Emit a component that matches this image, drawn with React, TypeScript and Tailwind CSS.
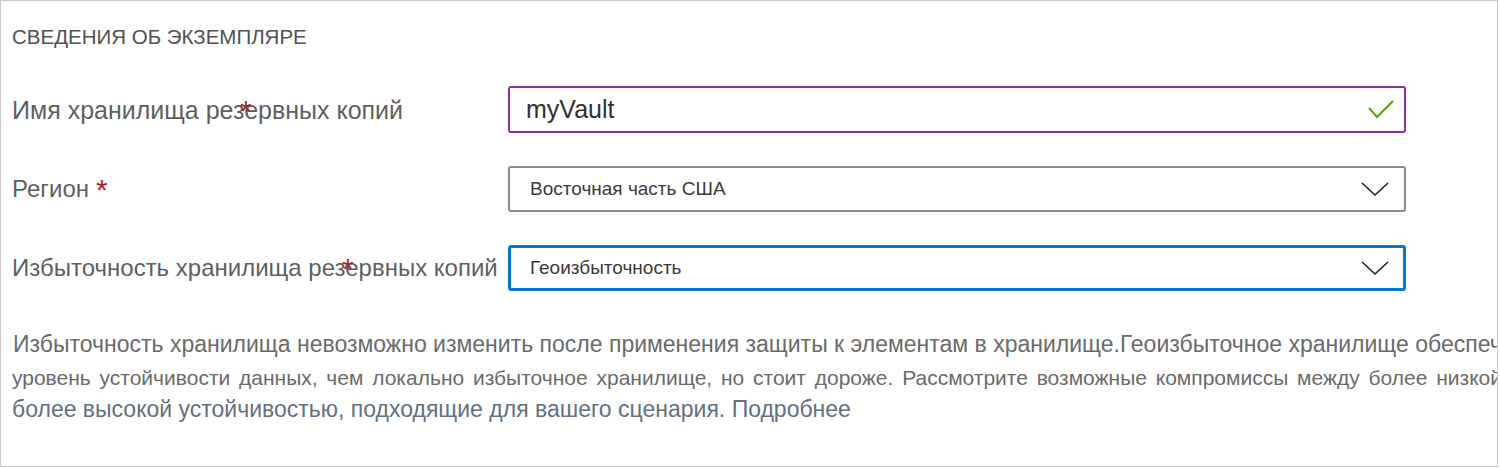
import React from 'react';

function Chevron() {
  return (
    <svg width="28" height="16" viewBox="0 0 28 16" fill="none">
      <polyline points="1,2 14,14 27,2" stroke="#201f1e" strokeWidth="1.6" />
    </svg>
  );
}

function Check() {
  return (
    <svg width="26" height="20" viewBox="0 0 26 20" fill="none">
      <polyline points="1,8 9,17 25,1" stroke="#57a300" strokeWidth="2" />
    </svg>
  );
}

function Label({ text, star, size }: { text: string; star: number; size: string }) {
  return (
    <div className={`relative w-[496px] shrink-0 leading-[30px] text-[#5f5f5f] ${size}`}>
      {text}
      <span className="absolute top-[1px] text-[30px] leading-none text-[#a4262c]" style={{ left: star }}>*</span>
    </div>
  );
}

export default function App() {
  return (
    <div className="w-[1500px] h-[468px] bg-white overflow-hidden font-['Liberation_Sans',Arial,sans-serif]">
      <div className="w-[1498px] h-[467px] border border-[#c8c8c8] pl-[11px] pt-[22px] overflow-hidden">
        <h2 className="text-[20.5px] leading-[28px] text-[#505050]">СВЕДЕНИЯ ОБ ЭКЗЕМПЛЯРЕ</h2>

        <div className="mt-[35px] flex flex-col gap-[33px]">
          <div className="flex items-center h-[47px]">
            <Label text="Имя хранилища резервных копий" star={228} size="text-[25px]" />
            <div className="w-[898px] h-[47px] border-2 border-[#8a2da5] rounded-[3px] flex items-center justify-between pl-[16px] pr-[10px]">
              <span className="text-[25px] text-[#323130]">myVault</span>
              <Check />
            </div>
          </div>

          <div className="flex items-center h-[46px]">
            <Label text="Регион" star={84} size="text-[24px]" />
            <div className="w-[898px] h-[46px] border-2 border-[#8a8886] rounded-[3px] flex items-center justify-between pl-[20px] pr-[15px]">
              <span className="text-[19px] text-[#3b3a39]">Восточная часть США</span>
              <Chevron />
            </div>
          </div>

          <div className="flex items-center h-[46px]">
            <Label text="Избыточность хранилища резервных копий" star={330} size="text-[24px]" />
            <div className="w-[898px] h-[46px] border-[3px] border-[#0078d4] rounded-[3px] flex items-center justify-between pl-[19px] pr-[14px]">
              <span className="text-[19px] text-[#3b3a39]">Геоизбыточность</span>
              <Chevron />
            </div>
          </div>
        </div>

        <div className="mt-[37px] text-[23px] text-[#6a6a6a]">
          <div className="pl-[1px] leading-[33px] whitespace-nowrap">
            Избыточность хранилища невозможно изменить после применения защиты к элементам в хранилище.Геоизбыточное хранилище обеспечивает более высокий
          </div>
          <div className="w-[1490px] text-[21px] leading-[33px] whitespace-nowrap text-justify [text-align-last:justify]">
            уровень устойчивости данных, чем локально избыточное хранилище, но стоит дороже. Рассмотрите возможные компромиссы между более низкой
          </div>
          <div className="leading-[30px] whitespace-nowrap text-[#627080]">
            более высокой устойчивостью, подходящие для вашего сценария. Подробнее
          </div>
        </div>
      </div>
    </div>
  );
}
